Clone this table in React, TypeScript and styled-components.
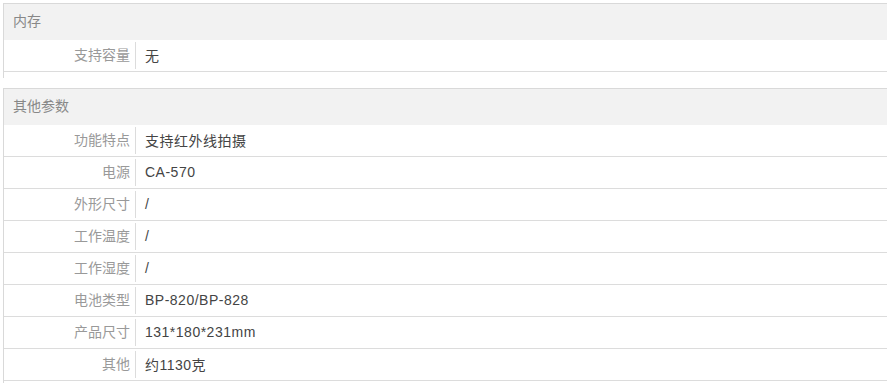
import styled, { createGlobalStyle } from 'styled-components';

type Spec = {
  title: string;
  rows: [string, string][];
};

const specs: Spec[] = [
  {
    title: '内存',
    rows: [['支持容量', '无']],
  },
  {
    title: '其他参数',
    rows: [
      ['功能特点', '支持红外线拍摄'],
      ['电源', 'CA-570'],
      ['外形尺寸', '/'],
      ['工作温度', '/'],
      ['工作湿度', '/'],
      ['电池类型', 'BP-820/BP-828'],
      ['产品尺寸', '131*180*231mm'],
      ['其他', '约1130克'],
    ],
  },
];

function App() {
  return (
    <>
      <GlobalStyle />
      <Page>
        {specs.map((spec) => (
          <Section key={spec.title}>
            <SectionHeader>{spec.title}</SectionHeader>
            {spec.rows.map(([label, value]) => (
              <Row key={label}>
                <Label>{label}</Label>
                <Value>{value}</Value>
              </Row>
            ))}
          </Section>
        ))}
      </Page>
    </>
  );
}

const GlobalStyle = createGlobalStyle`
  body {
    margin: 0;
    background: #fff;
    font-family: "Liberation Sans", "Noto Sans CJK SC", sans-serif;
  }
`;

const Page = styled.div`
  padding: 3px 4px 0 3px;
`;

const Section = styled.div`
  border-left: 1px solid #d9d9d9;
  padding-bottom: 6px;
  margin-bottom: 10px;
`;

const SectionHeader = styled.div`
  height: 36px;
  line-height: 35px;
  padding-left: 9px;
  border-top: 1px solid #d9d9d9;
  background: #f2f2f2;
  color: #888;
  font-size: 14px;
`;

const Row = styled.div`
  display: flex;
  align-items: center;
  height: 32px;
  padding-bottom: 1px;
  box-sizing: border-box;
  border-bottom: 1px solid #dcdcdc;
  font-size: 14px;
`;

const Label = styled.div`
  width: 126px;
  padding-right: 5px;
  text-align: right;
  color: #999;
  line-height: 27px;
  border-right: 1px solid #dcdcdc;
`;

const Value = styled.div`
  padding-left: 9px;
  color: #444;
  letter-spacing: 0.5px;
`;

export default App;
